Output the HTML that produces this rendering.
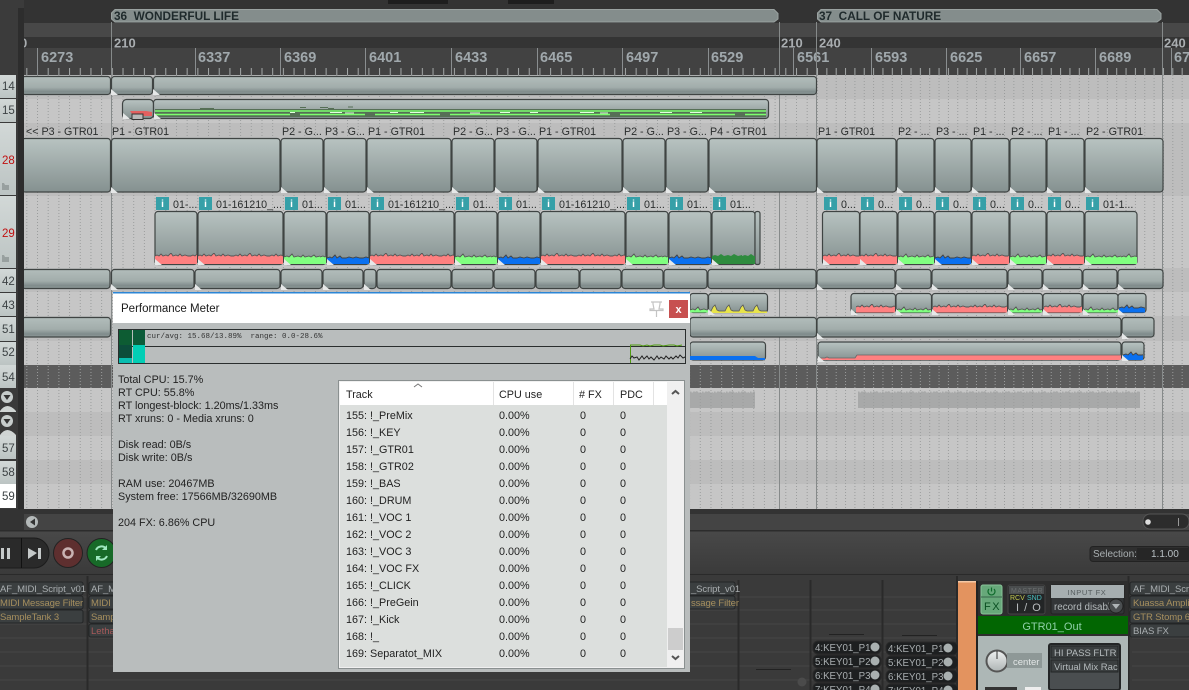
<!DOCTYPE html>
<html><head><meta charset="utf-8"><style>
html,body{margin:0;padding:0;background:#333;width:1189px;height:690px;overflow:hidden}
svg{position:absolute;left:0;top:0;display:block}
text{font-family:"Liberation Sans",sans-serif;white-space:pre}
.i{fill:url(#ig);stroke:#3f4443;stroke-width:1.2}
.h{fill:url(#hg);stroke:#3f4443;stroke-width:1.2}
.r{font-size:14.5px;font-weight:bold;fill:#a0a8ac}
.b{font-size:13px;font-weight:bold;fill:#a9adb0}
.l{font-size:10.7px;fill:#2a2d2d}
.n{font-size:11.5px;fill:#3c4244}
.d{font-size:10.8px;fill:#222}
.m{font-size:10.8px;fill:#222}
.f{fill:#3b3f40;stroke:#232526;stroke-width:1}
.s{font-size:9.5px;fill:#a9aeb0;letter-spacing:-.1px}
.g{font-size:9.5px;fill:#a68f5e;letter-spacing:-.1px}
.w{stroke:none}
</style></head><body>
<svg width="1189" height="690" viewBox="0 0 1189 690" xmlns="http://www.w3.org/2000/svg">
<defs>
<linearGradient id="ig" x1="0" y1="0" x2="0" y2="1"><stop offset="0" stop-color="#b8c3c1"/><stop offset="1" stop-color="#859190"/></linearGradient>
<linearGradient id="hg" x1="0" y1="0" x2="0" y2="1"><stop offset="0" stop-color="#b2bdbb"/><stop offset=".6" stop-color="#a2adab"/><stop offset=".85" stop-color="#7f8b8b"/><stop offset="1" stop-color="#8f9a99"/></linearGradient>
<linearGradient id="bt" x1="0" y1="0" x2="0" y2="1"><stop offset="0" stop-color="#d2d8d7"/><stop offset="1" stop-color="#bcc4c3"/></linearGradient>
<linearGradient id="tr" x1="0" y1="0" x2="0" y2="1"><stop offset="0" stop-color="#494949"/><stop offset="1" stop-color="#3a3a3a"/></linearGradient>
<linearGradient id="knob" x1="0" y1="0" x2="0" y2="1"><stop offset="0" stop-color="#eef0f0"/><stop offset="1" stop-color="#aeb4b4"/></linearGradient>
<pattern id="g1" patternUnits="userSpaceOnUse" x="37" y="0" width="10.69" height="3"><rect x="0" y="0" width="1" height="1" fill="#9a9c9c"/></pattern>
<pattern id="g2" patternUnits="userSpaceOnUse" x="817" y="0" width="9.35" height="3"><rect x="0" y="0" width="1" height="1" fill="#9a9c9c"/></pattern>
<pattern id="t1" patternUnits="userSpaceOnUse" x="37" y="0" width="10.69" height="100"><rect x="0" y="0" width="1" height="100" fill="#a4a8a8"/></pattern>
<pattern id="t2" patternUnits="userSpaceOnUse" x="817" y="0" width="9.35" height="100"><rect x="0" y="0" width="1" height="100" fill="#a4a8a8"/></pattern>
<pattern id="ws" patternUnits="userSpaceOnUse" width="36" height="11"><path d="M0 3l2-1 2 1 2-2 2 2 3-1 2 1 3-3 2 3 3-1 2 1 2-2 2 2 3-1 3 1 3 0V11H0z" fill="#ff8080"/><path d="M0 3l2-1 2 1 2-2 2 2 3-1 2 1 3-3 2 3 3-1 2 1 2-2 2 2 3-1 3 1 3 0" fill="none" stroke="#555" stroke-width=".9"/></pattern>
<pattern id="wg" patternUnits="userSpaceOnUse" width="36" height="11"><path d="M0 4l3-1 2 1 3-3 2 3 4-1 3 1 2-2 2 2 4-1 2 1 3-2 2 2 4-1V11H0z" fill="#80ff80"/><path d="M0 4l3-1 2 1 3-3 2 3 4-1 3 1 2-2 2 2 4-1 2 1 3-2 2 2 4-1" fill="none" stroke="#555" stroke-width=".9"/></pattern>
<pattern id="wb" patternUnits="userSpaceOnUse" width="42" height="11"><path d="M0 5l3-1 2 1 3-3 2 3 3-2 2 2 4 0 3-1 4 1 3-1 4 1 3 0 3-1 3 1V11H0z" fill="#0a70f0"/><path d="M0 5l3-1 2 1 3-3 2 3 3-2 2 2 4 0 3-1 4 1 3-1 4 1 3 0 3-1 3 1" fill="none" stroke="#444" stroke-width=".9"/></pattern>
<pattern id="wd" patternUnits="userSpaceOnUse" width="30" height="11"><path d="M0 3l3-1 3 1 3-2 3 2 4-1 3 1 3-2 4 2 4-1V11H0z" fill="#2e8b3e"/></pattern>
<pattern id="wy" patternUnits="userSpaceOnUse" width="14" height="9"><path d="M0 7l2 0 2-4 2-2 2 5 2 1 4 0V9H0z" fill="#e8e44a"/><path d="M0 7l2 0 2-4 2-2 2 5 2 1 4 0" fill="none" stroke="#555" stroke-width=".8"/></pattern>
<pattern id="wa" patternUnits="userSpaceOnUse" width="12" height="18"><path d="M0 2l1-1 1 2 2-2 1 1 2-1 2 2 1-1 2 1V18H0z" fill="#a8a9a9"/></pattern>
<g id="tri"><path d="M0 0V6H7z" fill="#e6e8e8"/></g>
</defs>

<!-- top chrome -->
<rect width="1189" height="690" fill="#333"/>
<rect x="0" y="0" width="24" height="76" fill="#3b3b3b"/>
<rect x="388" y="0" width="60" height="4" fill="#1e1e1e"/><rect x="508" y="0" width="46" height="4" fill="#1e1e1e"/>
<rect x="24" y="23" width="1165" height="14" fill="#484848"/>
<rect x="24" y="37" width="1165" height="11" fill="#343434"/>
<rect x="24" y="48" width="1165" height="27" fill="#424242"/>
<rect x="24" y="68" width="793" height="7" fill="url(#t1)"/><rect x="817" y="68" width="372" height="7" fill="url(#t2)"/>
<path d="M37.500 48V75M195.500 48V75M280.500 48V75M365.500 48V75M451.500 48V75M537.500 48V75M622.500 48V75M708.500 48V75M793.500 48V75M871.500 48V75M946.500 48V75M1020.500 48V75M1095.500 48V75M1171.500 48V75" stroke="#8a8e90"/>
<path d="M115 9.500H774l4 4V19l-4 3H115l-3.500-3v-6z" fill="#848d8c" stroke="#9aa2a1"/>
<path d="M821 9.500H1157l4 4V19l-4 3H821l-3.500-3v-6z" fill="#848d8c" stroke="#9aa2a1"/>
<text x="114" y="20" font-size="11.800" font-weight="bold" fill="#1f2a2c">36  WONDERFUL LIFE</text>
<text x="819" y="20" font-size="11.800" font-weight="bold" fill="#1f2a2c">37  CALL OF NATURE</text>
<text x="20" y="47.500" class="b">0</text>
<text x="114" y="47.500" class="b">210</text><text x="781" y="47.500" class="b">210</text><text x="819" y="47.500" class="b">240</text><text x="1164" y="47.500" class="b">240</text>
<text x="41" y="62" class="r">6273</text><text x="198" y="62" class="r">6337</text><text x="284" y="62" class="r">6369</text><text x="369" y="62" class="r">6401</text><text x="455" y="62" class="r">6433</text><text x="540" y="62" class="r">6465</text><text x="626" y="62" class="r">6497</text><text x="711" y="62" class="r">6529</text><text x="797" y="62" class="r">6561</text><text x="875" y="62" class="r">6593</text><text x="950" y="62" class="r">6625</text><text x="1024" y="62" class="r">6657</text><text x="1099" y="62" class="r">6689</text><text x="1174" y="62" class="r">6721</text>

<!-- arrange bands -->
<rect x="24" y="75" width="1165" height="435" fill="#c6c6c6"/>
<path d="M24 75h1165v24H24zM24 123h1165v73H24zM24 268h1165v24H24zM24 316h1165v25H24zM24 412h1165v24H24zM24 460h1165v24H24z" fill="#bdbdbd"/>
<rect x="24" y="365" width="1165" height="23" fill="#5c5c5c"/>
<rect transform="translate(858,390)" width="282" height="18" fill="url(#wa)"/>
<rect transform="translate(690,390)" width="65" height="18" fill="url(#wa)"/>
<rect x="24" y="75" width="793" height="435" fill="url(#g1)"/><rect x="817" y="75" width="372" height="435" fill="url(#g2)"/>
<path d="M111.500 22V510M779.500 22V510M816.500 22V510M1162.500 22V510" stroke="#868a8a"/>

<!-- row 14 -->
<rect class="h" x="22" y="76.500" width="88.500" height="18" rx="3"/><rect class="h" x="111.500" y="76.500" width="41" height="18" rx="3"/><rect class="h" x="153.500" y="76.500" width="663" height="18" rx="3"/>
<use href="#tri" x="111" y="89"/><use href="#tri" x="153" y="89"/>
<!-- row 15 -->
<rect class="i" x="122.500" y="99.500" width="31" height="19" rx="4"/><rect class="i" x="153.500" y="99.500" width="615" height="19" rx="3"/>
<path d="M130 111h16l6 1v4h-10l-10-2z" fill="#e36060"/><rect x="132" y="114" width="11" height="5.500" fill="#b8b8b8" stroke="#333"/>
<rect x="155" y="109" width="611" height="8" fill="#566f56"/>
<path d="M155 111H540M155 114.500H290M300 114.500H365M375 114.500H440M450 114.500H610M620 114.500H735M745 114.500H766M540 111H766" stroke="#7cff6e" stroke-width="1.600"/>
<path d="M290 112.500h5M330 112.500h12M345 113h9M390 112.500h8M410 112.500h14M470 113h10M500 112.500h10M530 112.500h8M580 112.500h14M600 113h8M660 112.500h12M690 112.500h12" stroke="#e2ffe0"/>
<path d="M200 108.500h14M300 107.500h6M320 107.500h8M328 108.500h6M348 107h5" stroke="#566f56"/>
<use href="#tri" x="123" y="113"/><use href="#tri" x="154" y="113"/>

<!-- row 28 -->
<text x="26" y="135" class="l">&lt;&lt; P3 - GTR01</text><text x="112" y="135" class="l">P1 - GTR01</text><text x="282" y="135" class="l">P2 - G...</text><text x="325" y="135" class="l">P3 - G...</text><text x="368" y="135" class="l">P1 - GTR01</text><text x="453" y="135" class="l">P2 - G...</text><text x="496" y="135" class="l">P3 - G...</text><text x="539" y="135" class="l">P1 - GTR01</text><text x="624" y="135" class="l">P2 - G...</text><text x="667" y="135" class="l">P3 - G...</text><text x="710" y="135" class="l">P4 - GTR01</text><text x="818" y="135" class="l">P1 - GTR01</text><text x="898" y="135" class="l">P2 - ...</text><text x="936" y="135" class="l">P3 - ...</text><text x="973" y="135" class="l">P1 - ...</text><text x="1011" y="135" class="l">P2 - ...</text><text x="1048" y="135" class="l">P1 - ...</text><text x="1086" y="135" class="l">P2 - GTR01</text>
<g>
<rect class="i" x="22" y="138.500" width="88.500" height="53.500" rx="3"/><rect class="i" x="111.500" y="138.500" width="168.500" height="53.500" rx="3"/><rect class="i" x="281" y="138.500" width="42" height="53.500" rx="3"/><rect class="i" x="324" y="138.500" width="42" height="53.500" rx="3"/><rect class="i" x="367" y="138.500" width="84" height="53.500" rx="3"/><rect class="i" x="452" y="138.500" width="42" height="53.500" rx="3"/><rect class="i" x="495" y="138.500" width="42" height="53.500" rx="3"/><rect class="i" x="538" y="138.500" width="84" height="53.500" rx="3"/><rect class="i" x="623" y="138.500" width="42" height="53.500" rx="3"/><rect class="i" x="666" y="138.500" width="42" height="53.500" rx="3"/><rect class="i" x="709" y="138.500" width="107.500" height="53.500" rx="3"/><rect class="i" x="817" y="138.500" width="79" height="53.500" rx="3"/><rect class="i" x="897" y="138.500" width="37" height="53.500" rx="3"/><rect class="i" x="935" y="138.500" width="36" height="53.500" rx="3"/><rect class="i" x="972" y="138.500" width="37" height="53.500" rx="3"/><rect class="i" x="1010" y="138.500" width="36" height="53.500" rx="3"/><rect class="i" x="1047" y="138.500" width="37" height="53.500" rx="3"/><rect class="i" x="1085" y="138.500" width="78" height="53.500" rx="3"/>
</g>
<use href="#tri" x="111" y="187"/><use href="#tri" x="281" y="187"/><use href="#tri" x="324" y="187"/><use href="#tri" x="367" y="187"/><use href="#tri" x="452" y="187"/><use href="#tri" x="495" y="187"/><use href="#tri" x="538" y="187"/><use href="#tri" x="623" y="187"/><use href="#tri" x="666" y="187"/><use href="#tri" x="709" y="187"/><use href="#tri" x="817" y="187"/><use href="#tri" x="897" y="187"/><use href="#tri" x="935" y="187"/><use href="#tri" x="972" y="187"/><use href="#tri" x="1010" y="187"/><use href="#tri" x="1047" y="187"/><use href="#tri" x="1085" y="187"/>

<!-- row 29 tags -->
<path d="M156 197h13v13h-13zM199 197h13v13h-13zM285 197h13v13h-13zM328 197h13v13h-13zM371 197h13v13h-13zM456 197h13v13h-13zM499 197h13v13h-13zM542 197h13v13h-13zM627 197h13v13h-13zM670 197h13v13h-13zM713 197h13v13h-13zM824 197h13v13h-13zM861 197h13v13h-13zM899 197h13v13h-13zM936 197h13v13h-13zM973 197h13v13h-13zM1011 197h13v13h-13zM1048 197h13v13h-13zM1086 197h13v13h-13z" fill="#36a0a8"/>
<g font-size="10" font-weight="bold" fill="#fff" text-anchor="middle"><text x="162.500" y="207">i</text><text x="205.500" y="207">i</text><text x="291.500" y="207">i</text><text x="334.500" y="207">i</text><text x="377.500" y="207">i</text><text x="462.500" y="207">i</text><text x="505.500" y="207">i</text><text x="548.500" y="207">i</text><text x="633.500" y="207">i</text><text x="676.500" y="207">i</text><text x="719.500" y="207">i</text><text x="830.500" y="207">i</text><text x="867.500" y="207">i</text><text x="905.500" y="207">i</text><text x="942.500" y="207">i</text><text x="979.500" y="207">i</text><text x="1017.500" y="207">i</text><text x="1054.500" y="207">i</text><text x="1092.500" y="207">i</text></g>
<g class="l"><text x="173" y="208">01-...</text><text x="216" y="208">01-161210_...</text><text x="302" y="208">01...</text><text x="345" y="208">01...</text><text x="388" y="208">01-161210_...</text><text x="473" y="208">01...</text><text x="516" y="208">01...</text><text x="559" y="208">01-161210_...</text><text x="644" y="208">01...</text><text x="687" y="208">01...</text><text x="730" y="208">01...</text><text x="841" y="208">0...</text><text x="878" y="208">0...</text><text x="916" y="208">0...</text><text x="953" y="208">0...</text><text x="990" y="208">0...</text><text x="1028" y="208">0...</text><text x="1065" y="208">0...</text><text x="1103" y="208">01-1...</text></g>
<!-- row 29 items -->
<rect class="i" x="155" y="211.500" width="42" height="53" rx="3"/><rect class="i" x="198" y="211.500" width="85" height="53" rx="3"/><rect class="i" x="284" y="211.500" width="42" height="53" rx="3"/><rect class="i" x="327" y="211.500" width="42" height="53" rx="3"/><rect class="i" x="370" y="211.500" width="84" height="53" rx="3"/><rect class="i" x="455" y="211.500" width="42" height="53" rx="3"/><rect class="i" x="498" y="211.500" width="42" height="53" rx="3"/><rect class="i" x="541" y="211.500" width="84" height="53" rx="3"/><rect class="i" x="626" y="211.500" width="42" height="53" rx="3"/><rect class="i" x="669" y="211.500" width="42" height="53" rx="3"/><rect class="i" x="712" y="211.500" width="43" height="53" rx="3"/><rect class="i" x="755" y="211.500" width="5" height="53" rx="2"/>
<rect class="i" x="822.500" y="211.500" width="37" height="53" rx="3"/><rect class="i" x="860" y="211.500" width="37" height="53" rx="3"/><rect class="i" x="898" y="211.500" width="36" height="53" rx="3"/><rect class="i" x="935" y="211.500" width="36" height="53" rx="3"/><rect class="i" x="972" y="211.500" width="37" height="53" rx="3"/><rect class="i" x="1010" y="211.500" width="36" height="53" rx="3"/><rect class="i" x="1047" y="211.500" width="37" height="53" rx="3"/><rect class="i" x="1085" y="211.500" width="52" height="53" rx="3"/>
<g class="w">
<rect transform="translate(155,253)" width="42" height="11" fill="url(#ws)"/><rect transform="translate(198,253)" width="85" height="11" fill="url(#ws)"/><rect transform="translate(284,253)" width="42" height="11" fill="url(#wg)"/><rect transform="translate(327,253)" width="42" height="11" fill="url(#wb)"/><rect transform="translate(370,253)" width="84" height="11" fill="url(#ws)"/><rect transform="translate(455,253)" width="42" height="11" fill="url(#wg)"/><rect transform="translate(498,253)" width="42" height="11" fill="url(#wb)"/><rect transform="translate(541,253)" width="84" height="11" fill="url(#ws)"/><rect transform="translate(626,253)" width="42" height="11" fill="url(#wg)"/><rect transform="translate(669,253)" width="42" height="11" fill="url(#wb)"/><rect transform="translate(712,253)" width="43" height="11" fill="url(#wd)"/>
<rect transform="translate(823,253)" width="37" height="11" fill="url(#ws)"/><rect transform="translate(860,253)" width="37" height="11" fill="url(#ws)"/><rect transform="translate(898,253)" width="36" height="11" fill="url(#wg)"/><rect transform="translate(935,253)" width="36" height="11" fill="url(#wb)"/><rect transform="translate(972,253)" width="37" height="11" fill="url(#ws)"/><rect transform="translate(1010,253)" width="36" height="11" fill="url(#wg)"/><rect transform="translate(1047,253)" width="37" height="11" fill="url(#ws)"/><rect transform="translate(1085,253)" width="52" height="11" fill="url(#wg)"/>
</g>
<use href="#tri" x="155" y="259"/><use href="#tri" x="198" y="259"/><use href="#tri" x="284" y="259"/><use href="#tri" x="327" y="259"/><use href="#tri" x="370" y="259"/><use href="#tri" x="455" y="259"/><use href="#tri" x="498" y="259"/><use href="#tri" x="541" y="259"/><use href="#tri" x="626" y="259"/><use href="#tri" x="669" y="259"/><use href="#tri" x="712" y="259"/><use href="#tri" x="823" y="259"/><use href="#tri" x="860" y="259"/><use href="#tri" x="898" y="259"/><use href="#tri" x="935" y="259"/><use href="#tri" x="972" y="259"/><use href="#tri" x="1010" y="259"/><use href="#tri" x="1047" y="259"/><use href="#tri" x="1085" y="259"/>

<!-- row 42 -->
<rect class="h" x="22" y="269.500" width="88" height="19" rx="3"/><rect class="h" x="111.500" y="269.500" width="82.500" height="19" rx="3"/><rect class="h" x="195" y="269.500" width="85" height="19" rx="3"/><rect class="h" x="281" y="269.500" width="41" height="19" rx="3"/><rect class="h" x="323" y="269.500" width="40" height="19" rx="3"/><rect class="h" x="364" y="269.500" width="12" height="19" rx="3"/><rect class="h" x="377" y="269.500" width="74" height="19" rx="3"/><rect class="h" x="452" y="269.500" width="41" height="19" rx="3"/><rect class="h" x="494" y="269.500" width="41" height="19" rx="3"/><rect class="h" x="536" y="269.500" width="43" height="19" rx="3"/><rect class="h" x="580" y="269.500" width="41" height="19" rx="3"/><rect class="h" x="622" y="269.500" width="41" height="19" rx="3"/><rect class="h" x="664" y="269.500" width="43" height="19" rx="3"/><rect class="h" x="708" y="269.500" width="108" height="19" rx="3"/><rect class="h" x="817" y="269.500" width="78" height="19" rx="3"/><rect class="h" x="896" y="269.500" width="35" height="19" rx="3"/><rect class="h" x="932" y="269.500" width="75" height="19" rx="3"/><rect class="h" x="1008" y="269.500" width="34" height="19" rx="3"/><rect class="h" x="1043" y="269.500" width="39" height="19" rx="3"/><rect class="h" x="1083" y="269.500" width="34" height="19" rx="3"/><rect class="h" x="1118" y="269.500" width="45" height="19" rx="3"/>
<use href="#tri" x="111" y="284"/><use href="#tri" x="195" y="284"/><use href="#tri" x="281" y="284"/><use href="#tri" x="323" y="284"/><use href="#tri" x="364" y="284"/><use href="#tri" x="817" y="284"/><use href="#tri" x="896" y="284"/><use href="#tri" x="932" y="284"/><use href="#tri" x="1008" y="284"/><use href="#tri" x="1043" y="284"/><use href="#tri" x="1083" y="284"/><use href="#tri" x="1118" y="284"/>

<!-- row 43 -->
<rect class="i" x="690" y="293.500" width="18" height="19" rx="3"/><rect class="i" x="708.500" y="293.500" width="59" height="19" rx="3"/>
<rect class="i" x="851" y="293.500" width="44.500" height="19" rx="3"/><rect class="i" x="896" y="293.500" width="35.500" height="19" rx="3"/><rect class="i" x="932" y="293.500" width="75.500" height="19" rx="3"/><rect class="i" x="1008" y="293.500" width="34.500" height="19" rx="3"/><rect class="i" x="1043" y="293.500" width="39" height="19" rx="3"/><rect class="i" x="1083" y="293.500" width="35" height="19" rx="3"/><rect class="i" x="1118" y="293.500" width="28" height="19" rx="3"/>
<rect transform="translate(690,306)" width="18" height="6.500" fill="url(#wg)"/><rect transform="translate(709,304)" width="58" height="9" fill="url(#wy)"/>
<rect transform="translate(856,304)" width="39" height="8.500" fill="url(#ws)"/><rect transform="translate(896,306)" width="35" height="6.500" fill="url(#wg)"/><rect transform="translate(933,304)" width="74" height="8.500" fill="url(#ws)"/><rect transform="translate(1008,306)" width="34" height="6.500" fill="url(#wg)"/><rect transform="translate(1044,304)" width="38" height="8.500" fill="url(#ws)"/><rect transform="translate(1083,306)" width="35" height="6.500" fill="url(#wg)"/><rect transform="translate(1119,303)" width="26" height="9.500" fill="url(#wb)"/>
<use href="#tri" x="851" y="309"/><use href="#tri" x="896" y="309"/><use href="#tri" x="932" y="309"/><use href="#tri" x="1008" y="309"/><use href="#tri" x="1043" y="309"/><use href="#tri" x="1083" y="309"/><use href="#tri" x="1118" y="309"/><use href="#tri" x="708" y="309"/>

<!-- row 51 -->
<rect class="h" x="22" y="317.500" width="88.500" height="19.500" rx="3"/><rect class="h" x="690" y="317.500" width="126.500" height="19.500" rx="3"/><rect class="h" x="817" y="317.500" width="304" height="19.500" rx="3"/><rect class="h" x="1122" y="317.500" width="32" height="19.500" rx="3"/>
<use href="#tri" x="817" y="333"/><use href="#tri" x="1122" y="333"/>
<!-- row 52 -->
<rect class="i" x="690" y="342" width="75.500" height="18" rx="3"/><rect class="i" x="818" y="342" width="303" height="18" rx="3"/><rect class="i" x="1122" y="342" width="22" height="18" rx="3"/>
<path d="M690 356H755l3 2h7v2H690z" fill="#0a70f0"/>
<path d="M818 360v-2h7l2-1 2 1h26l2-3h264v5z" fill="#ff8080"/><path d="M818 358h7l2-1 2 1h26l2-3h264" fill="none" stroke="#666" stroke-width=".8"/>
<rect transform="translate(1123,350)" width="20" height="10" fill="url(#wb)"/>
<use href="#tri" x="818" y="356"/><use href="#tri" x="1122" y="355"/>

<!-- TCP -->
<rect x="16" y="75" width="2" height="435" fill="#3a3a3a"/><rect x="18" y="8" width="6" height="502" fill="#2d2d2d"/>
<rect x="0" y="75" width="16" height="435" fill="#3a3a3a"/>
<g fill="url(#bt)"><rect x="0" y="75" width="16" height="23"/><rect x="0" y="99" width="16" height="23"/><rect x="0" y="123" width="16" height="72"/><rect x="0" y="196" width="16" height="72"/><rect x="0" y="269" width="16" height="23"/><rect x="0" y="293" width="16" height="23"/><rect x="0" y="317" width="16" height="24"/><rect x="0" y="342" width="16" height="23"/><rect x="0" y="365" width="16" height="23"/><rect x="0" y="436" width="16" height="23"/><rect x="0" y="461" width="16" height="23"/></g>
<rect x="0" y="484" width="16" height="24" fill="#fff"/>
<rect x="0" y="389" width="16" height="46" fill="#3a3a3a"/>
<path d="M0 411q7-10 16 0v1H0zM0 435q7-10 16 0v1H0zM0 512q7-3 14 0z" fill="#cfd4d3"/>
<circle cx="7" cy="397" r="6" fill="#c6cccb"/><circle cx="7" cy="421" r="6" fill="#c6cccb"/>
<path d="M3.500 395h7L7 400zM3.500 419h7L7 424z" fill="#333"/>
<path d="M2 190h7v-5H5l-1-2H2zM2 262h7v-5H5l-1-2H2z" fill="#98a09f"/>
<g class="n"><text x="2" y="90">14</text><text x="2" y="114">15</text><text x="2" y="164" style="fill:#c01010">28</text><text x="2" y="237" style="fill:#c01010">29</text><text x="2" y="285">42</text><text x="2" y="309">43</text><text x="2" y="333">51</text><text x="2" y="356">52</text><text x="2" y="381">54</text><text x="2" y="452">57</text><text x="2" y="476">58</text><text x="2" y="500">59</text></g>

<!-- scrollbar area -->
<rect x="0" y="509" width="24" height="66" fill="#333"/>
<rect x="24" y="509" width="1165" height="5" fill="#333"/>
<rect x="24" y="514" width="1165" height="16" fill="#444"/>
<rect x="0" y="530" width="1189" height="45" fill="url(#tr)"/><rect y="530" width="1189" height="1.500" fill="#2c2c2c"/><rect y="574" width="1189" height="1" fill="#2a2a2a"/>
<circle cx="32" cy="522" r="6" fill="#b4b9b9"/><path d="M35 518.500v7l-5-3.500z" fill="#333"/>
<rect x="1143" y="514" width="46" height="15" rx="7" fill="#2c2c2c" stroke="#555"/><circle cx="1148" cy="522" r="2.800" fill="#ddd"/><path d="M1178.500 518v8" stroke="#999"/>

<!-- transport -->
<rect x="-20" y="538" width="69" height="30" rx="15" fill="#2a2a2a" stroke="#1c1c1c"/>
<path d="M21.500 538v30" stroke="#111"/>
<path d="M1 548h3v11H1zM7 548h3v11H7zM28 548l9 5-9 6zM38 548h3v11h-3z" fill="#c5c9c9"/>
<circle cx="68" cy="553" r="14.500" fill="#5e2f2f" stroke="#222"/><circle cx="68" cy="553" r="4.500" fill="none" stroke="#c9b3b3" stroke-width="2.500"/>
<circle cx="101.500" cy="553" r="14.500" fill="#176a28" stroke="#222"/><path d="M96 550a6 6 0 0 1 10-1.500M107 556a6 6 0 0 1-10 1.500" fill="none" stroke="#9fe8c0" stroke-width="2"/><path d="M107 545v5h-5zM96 561v-5h5z" fill="#9fe8c0"/>
<rect x="1090" y="546.500" width="100" height="15" rx="3" fill="#2f2f2f" stroke="#222"/><rect x="1137" y="548" width="52" height="12" fill="#262626"/>
<text x="1093" y="557" font-size="10" fill="#aab0b2">Selection:</text><text x="1151" y="557" font-size="10" fill="#b8c0c4">1.1.00</text>

<!-- mixer -->
<rect x="0" y="575" width="1189" height="115" fill="#3a3a3a"/>
<path d="M0 597H958M0 610H958M0 624H958M0 638H958M0 652H958M0 666H958M0 680H958" stroke="#454545"/>
<path d="M1132 624H1189M1132 638H1189M1132 652H1189M1132 666H1189M1132 680H1189" stroke="#454545"/>
<path d="M87.500 576V690M738.500 580V690M810.500 580V690M882.500 580V690M957 576V690M1128.500 576V690" stroke="#2a2a2a" stroke-width="2"/>
<rect class="f" x="-4" y="582" width="87" height="13" rx="2"/><rect class="f" x="-4" y="596" width="87" height="13" rx="2"/><rect class="f" x="-4" y="610" width="87" height="13" rx="2"/>
<text x="0" y="592" class="s">AF_MIDI_Script_v01</text><text x="0" y="606" class="g">MIDI Message Filter</text><text x="0" y="620" class="g">SampleTank 3</text>
<rect class="f" x="89" y="582" width="30" height="13" rx="2"/><rect class="f" x="89" y="596" width="30" height="13" rx="2"/><rect class="f" x="89" y="610" width="30" height="13" rx="2"/><rect class="f" x="89" y="624" width="30" height="13" rx="2"/>
<text x="91" y="592" class="s">AF_M</text><text x="91" y="606" class="g">MIDI</text><text x="91" y="620" class="g">Samp</text><text x="91" y="634" font-size="9.500" fill="#a85a5a">Letha</text>
<rect class="f" x="688" y="582" width="47" height="13" rx="2"/><rect class="f" x="688" y="596" width="47" height="13" rx="2"/>
<text x="691" y="592" class="s">_Script_v01</text><text x="691" y="606" class="g">ssage Filter</text>
<path d="M756 669.500H791M829 634.500H864M902 635.500H937" stroke="#222"/><circle cx="802" cy="682" r="4.500" fill="#4b4b4b"/>
<g fill="#1d1f20" stroke="#2a2a2a"><rect x="813" y="641" width="68" height="13" rx="5"/><rect x="813" y="655" width="68" height="13" rx="5"/><rect x="813" y="669" width="68" height="13" rx="5"/><rect x="813" y="683" width="68" height="13" rx="5"/><rect x="886" y="642" width="72" height="13" rx="5"/><rect x="886" y="656" width="72" height="13" rx="5"/><rect x="886" y="670" width="72" height="13" rx="5"/><rect x="886" y="684" width="72" height="13" rx="5"/></g>
<g font-size="9.700" fill="#a9aeb0"><text x="815" y="651">4:KEY01_P1</text><text x="815" y="665">5:KEY01_P2</text><text x="815" y="679">6:KEY01_P3</text><text x="815" y="693">7:KEY01_P4</text><text x="888" y="652">4:KEY01_P1</text><text x="888" y="666">5:KEY01_P2</text><text x="888" y="680">6:KEY01_P3</text><text x="888" y="694">7:KEY01_P4</text></g>
<g fill="#a9b0b0"><circle cx="875" cy="647" r="4.500"/><circle cx="875" cy="661" r="4.500"/><circle cx="875" cy="675" r="4.500"/><circle cx="875" cy="689" r="4.500"/><circle cx="948" cy="648" r="4.500"/><circle cx="948" cy="662" r="4.500"/><circle cx="948" cy="676" r="4.500"/><circle cx="948" cy="690" r="4.500"/></g>

<!-- selected strip -->
<rect x="958" y="581" width="18" height="109" fill="#e3935f"/><rect x="958" y="581" width="18" height="1.500" fill="#f5c8a5"/><rect x="976" y="581" width="2" height="109" fill="#222"/>
<rect x="978" y="581" width="150" height="109" fill="#2e2e2e"/>
<rect x="981" y="585" width="21" height="29" rx="2" fill="#67a87a" stroke="#8ac49a"/><path d="M981 597h21" stroke="#37664a"/>
<path d="M989 589a3.500 3.500 0 1 0 5 0M991.500 587.500v4" fill="none" stroke="#0f6a2c" stroke-width="1.200"/>
<text x="984" y="610" font-size="11" fill="#0a4f22" letter-spacing="1.500">FX</text>
<rect x="1008" y="585" width="37" height="29" rx="2" fill="#232526" stroke="#444"/>
<rect x="1009" y="586" width="35" height="8" fill="#4a4d4e"/>
<text x="1011" y="593" font-size="7" fill="#696d6e" letter-spacing=".5">MASTER</text>
<text x="1010" y="600" font-size="7" fill="#c4ca50">RCV</text><text x="1027" y="600" font-size="7" fill="#49c0c0">SND</text>
<text x="1016" y="611" font-size="11" fill="#b8bcbe" letter-spacing="1">I / O</text>
<rect x="1051" y="585" width="73" height="29" rx="2" fill="#333638" stroke="#222"/><rect x="1051" y="585" width="73" height="13" fill="#a6aeb0"/>
<text x="1087" y="595" font-size="7.500" fill="#555c5e" text-anchor="middle" letter-spacing=".6">INPUT FX</text>
<text x="1054" y="610" font-size="9.800" fill="#b4babc">record disabl</text>
<circle cx="1116" cy="606" r="7" fill="#4a4e50" stroke="#222"/><path d="M1112 604h8l-4 5z" fill="#aeb4b6"/>
<rect x="978" y="616" width="150" height="18" fill="#026602"/>
<text x="1052" y="630" font-size="11" fill="#8fd0a8" text-anchor="middle">GTR01_Out</text>
<rect x="978" y="636" width="150" height="54" fill="#adb7b6"/>
<circle cx="997" cy="661" r="10.500" fill="url(#knob)" stroke="#555" stroke-width="2"/><path d="M997 651v8" stroke="#333"/>
<rect x="1007" y="653" width="35" height="15" fill="#8e9897"/><text x="1013" y="665" font-size="9.500" fill="#e2e6e6">center</text>
<rect x="1049" y="644" width="71" height="46" rx="2" fill="#4a4e50" stroke="#232526" stroke-width="2"/>
<rect class="f" x="1051" y="646" width="67" height="12"/><rect class="f" x="1051" y="660" width="67" height="12"/>
<text x="1054" y="656" font-size="9.500" fill="#b4babc">HI PASS FLTR</text><text x="1054" y="670" font-size="9.500" fill="#b4babc">Virtual Mix Rac</text>
<rect x="985" y="687" width="32" height="3" fill="#333"/><rect x="1025" y="687" width="16" height="3" fill="#eee"/>
<!-- right strip -->
<rect class="f" x="1130" y="582" width="60" height="13" rx="2"/><rect class="f" x="1130" y="596" width="60" height="13" rx="2"/><rect class="f" x="1130" y="610" width="60" height="13" rx="2"/><rect class="f" x="1130" y="624" width="60" height="13" rx="2"/>
<text x="1133" y="592" class="s">AF_MIDI_Script</text><text x="1133" y="606" class="g">Kuassa Amplif</text><text x="1133" y="620" class="g">GTR Stomp 6</text><text x="1133" y="634" class="s">BIAS FX</text>

<!-- dialog -->
<rect x="113" y="292" width="577" height="380" fill="#b9bdbd"/>
<rect x="113" y="292" width="577" height="1.500" fill="#2b86d6"/>
<rect x="113" y="293.500" width="577" height="29.500" fill="#fff"/>
<text x="121" y="312" font-size="11.500" fill="#1a1a1a">Performance Meter</text>
<path d="M651 302h11M653 302v2l1 5h-4v1.500h13V309h-4l1-5v-2M656.500 311v6" fill="#fff" stroke="#c4c4c4" stroke-width="1.200"/>
<rect x="669" y="300" width="19" height="18" fill="#c75050"/>
<text x="678.500" y="313" font-size="11" font-weight="bold" fill="#fff" text-anchor="middle">x</text>
<rect x="118.500" y="329.500" width="567" height="34" fill="none" stroke="#2a2e2e"/>
<path d="M118 346.500H686" stroke="#2a2e2e"/>
<rect x="119" y="330" width="13" height="33" fill="#0c4d3b"/><rect x="119" y="330" width="13" height="15" fill="#0d5c33"/><rect x="119" y="358" width="13" height="5" fill="#08bdb0"/>
<rect x="133" y="330" width="12" height="33" fill="#0c5c3a"/><rect x="133" y="345" width="12" height="18" fill="#02ceb5"/>
<text x="147" y="338" font-size="7.500" fill="#333" style="font-family:'Liberation Mono',monospace">cur/avg: 15.68/13.89%  range: 0.0-28.6%</text>
<path d="M630.500 363V345H640l3 1 4-1 3 1 4-1 6 0 3 1 6-1 5 0 3 1 5-1" fill="none" stroke="#4f9a10"/>
<path d="M630 359l2-3 2 2 3-1 2 3 3-4 2 3 3-3 2 3 2-2 3 3 3-4 2 3 2-2 3 2 2-3 3 3 2-2 2 2 3-3 2 2 2-3 3 3 2-1" fill="none" stroke="#222"/>
<g class="d"><text x="118" y="383">Total CPU: 15.7%</text><text x="118" y="396">RT CPU: 55.8%</text><text x="118" y="409">RT longest-block: 1.20ms/1.33ms</text><text x="118" y="422">RT xruns: 0 - Media xruns: 0</text><text x="118" y="448">Disk read: 0B/s</text><text x="118" y="461">Disk write: 0B/s</text><text x="118" y="487">RAM use: 20467MB</text><text x="118" y="500">System free: 17566MB/32690MB</text><text x="118" y="526">204 FX: 6.86% CPU</text></g>
<!-- table -->
<rect x="338.500" y="380.500" width="346" height="288" fill="#f0f0f0" stroke="#8a9090"/>
<rect x="340" y="382" width="327" height="23" fill="#fff"/>
<rect x="340" y="405" width="327" height="262" fill="#dcdfdd"/>
<path d="M493.500 382v23M573.500 382v23M613.500 382v23M653.500 382v23" stroke="#e3e3e3"/>
<path d="M414 387l4-3 4 3" fill="none" stroke="#777"/>
<g class="m"><text x="346" y="398">Track</text><text x="499" y="398">CPU use</text><text x="579" y="398"># FX</text><text x="620" y="398">PDC</text></g>
<g class="m">
<text x="346" y="419">155: !_PreMix</text><text x="499" y="419">0.00%</text><text x="580" y="419">0</text><text x="620" y="419">0</text>
<text x="346" y="436">156: !_KEY</text><text x="499" y="436">0.00%</text><text x="580" y="436">0</text><text x="620" y="436">0</text>
<text x="346" y="453">157: !_GTR01</text><text x="499" y="453">0.00%</text><text x="580" y="453">0</text><text x="620" y="453">0</text>
<text x="346" y="470">158: !_GTR02</text><text x="499" y="470">0.00%</text><text x="580" y="470">0</text><text x="620" y="470">0</text>
<text x="346" y="487">159: !_BAS</text><text x="499" y="487">0.00%</text><text x="580" y="487">0</text><text x="620" y="487">0</text>
<text x="346" y="504">160: !_DRUM</text><text x="499" y="504">0.00%</text><text x="580" y="504">0</text><text x="620" y="504">0</text>
<text x="346" y="521">161: !_VOC 1</text><text x="499" y="521">0.00%</text><text x="580" y="521">0</text><text x="620" y="521">0</text>
<text x="346" y="538">162: !_VOC 2</text><text x="499" y="538">0.00%</text><text x="580" y="538">0</text><text x="620" y="538">0</text>
<text x="346" y="555">163: !_VOC 3</text><text x="499" y="555">0.00%</text><text x="580" y="555">0</text><text x="620" y="555">0</text>
<text x="346" y="572">164: !_VOC FX</text><text x="499" y="572">0.00%</text><text x="580" y="572">0</text><text x="620" y="572">0</text>
<text x="346" y="589">165: !_CLICK</text><text x="499" y="589">0.00%</text><text x="580" y="589">0</text><text x="620" y="589">0</text>
<text x="346" y="606">166: !_PreGein</text><text x="499" y="606">0.00%</text><text x="580" y="606">0</text><text x="620" y="606">0</text>
<text x="346" y="623">167: !_Kick</text><text x="499" y="623">0.00%</text><text x="580" y="623">0</text><text x="620" y="623">0</text>
<text x="346" y="640">168: !_</text><text x="499" y="640">0.00%</text><text x="580" y="640">0</text><text x="620" y="640">0</text>
<text x="346" y="657">169: Separatot_MIX</text><text x="499" y="657">0.00%</text><text x="580" y="657">0</text><text x="620" y="657">0</text>
</g>
<rect x="668" y="628" width="15" height="22" fill="#cdcdcd"/>
<path d="M672 394l3.500-3 3.500 3M672 656l3.500 3 3.500-3" fill="none" stroke="#555" stroke-width="2"/>
</svg>
</body></html>
